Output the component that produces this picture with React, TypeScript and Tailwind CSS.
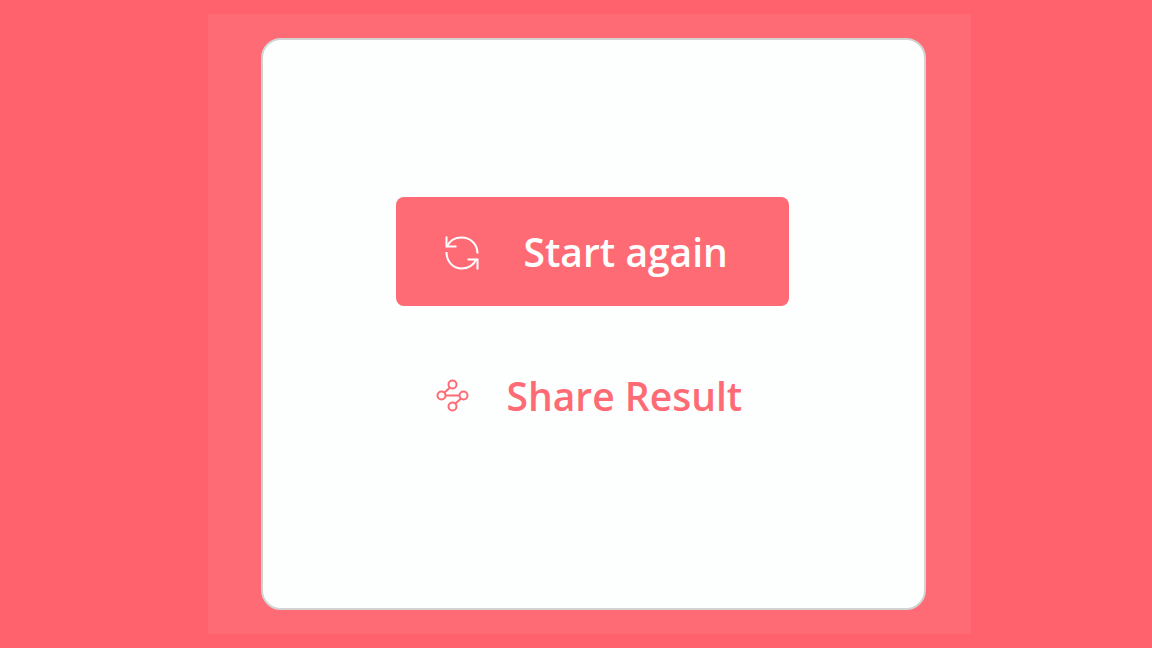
const RestartIcon = () => (
  <svg
    className="size-9 shrink-0"
    viewBox="0 0 36 36"
    fill="none"
    stroke="currentColor"
    strokeWidth="2"
    aria-hidden="true"
  >
    <path d="M3 11.5C5.500 6 11 2.500 17.500 2.500C26.500 2.500 33.500 9 33.500 18.500" />
    <path d="M2.500 1.500V11.500H12.500" />
    <path d="M2.500 17C2.500 26.500 9 33.500 18 33.500C24.500 33.500 30 29.500 32.500 24" />
    <path d="M23.500 24.500H33.500V34.500" />
  </svg>
)

const ShareIcon = () => (
  <svg
    className="size-9 shrink-0"
    viewBox="0 0 36 36"
    fill="none"
    stroke="currentColor"
    strokeWidth="2"
    aria-hidden="true"
  >
    <circle cx="17.500" cy="6.500" r="4" />
    <circle cx="6.500" cy="17.500" r="4" />
    <circle cx="28.500" cy="17.500" r="4" />
    <circle cx="17.500" cy="28.500" r="4" />
    <path d="M15 9.500L9 15M10.500 17.500H24.500M26 20.500L20 26" />
  </svg>
)

const App = () => {
  return (
    <main className="flex min-h-screen items-start justify-center bg-[#ff626d] pt-3.5 pl-[26px] font-['Open_Sans',sans-serif]">
      <section className="w-full max-w-[763px] bg-[#ff6b75] py-6 pr-[45px] pl-[53px]">
        <div className="flex flex-col items-center gap-9 rounded-[20px] border-2 border-[#d3d3d3] bg-[#fdfefe] pt-[157px] pr-0.5 pb-[158px]">
          <button
            type="button"
            className="flex h-[109px] w-full max-w-[393px] items-center gap-11 rounded-lg bg-[#ff6b75] pt-0.5 pl-12 text-[39px] font-semibold text-white"
          >
            <RestartIcon />
            Start again
          </button>
          <button
            type="button"
            className="flex h-[108px] w-full max-w-[393px] items-center gap-9 pl-[39px] text-[39px] font-semibold text-[#ff6b75]"
          >
            <ShareIcon />
            Share Result
          </button>
        </div>
      </section>
    </main>
  )
}

export default App
